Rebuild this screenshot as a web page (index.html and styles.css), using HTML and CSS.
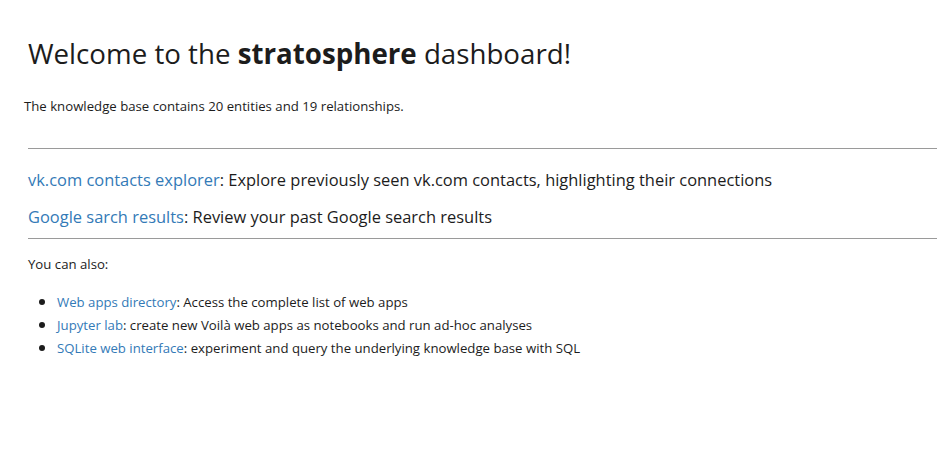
FILE: index.html
```html
<!DOCTYPE html>
<html lang="en">
<head>
<meta charset="utf-8">
<title>stratosphere dashboard</title>
<link rel="stylesheet" href="styles.css">
</head>
<body>
<main class="page">
  <h1 class="title">Welcome to the <strong>stratosphere</strong> dashboard!</h1>
  <p class="summary">The knowledge base contains 20 entities and 19 relationships.</p>
  <section class="apps">
    <hr class="rule">
    <div class="app-row"><a href="#">vk.com contacts explorer</a>: Explore previously seen vk.com contacts, highlighting their connections</div>
    <div class="app-row"><a href="#">Google sarch results</a>: Review your past Google search results</div>
    <hr class="rule">
    <p class="also">You can also:</p>
    <ul class="links">
      <li><a href="#">Web apps directory</a>: Access the complete list of web apps</li>
      <li><a href="#">Jupyter lab</a>: create new Voilà web apps as notebooks and run ad-hoc analyses</li>
      <li><a href="#">SQLite web interface</a>: experiment and query the underlying knowledge base with SQL</li>
    </ul>
  </section>
</main>
</body>
</html>
```

FILE: styles.css
```css
html, body {
  margin: 0;
  padding: 0;
  background: #ffffff;
}

body {
  font-family: "Open Sans", "Noto Sans", sans-serif;
  color: #1c1c1c;
}

.page {
  padding-left: 24px;
  padding-top: 33px;
}

a {
  color: #337ab7;
  text-decoration: none;
}

.title {
  margin: 0 0 23px 4px;
  font-size: 27.7px;
  line-height: 40px;
  font-weight: 400;
}

.title strong {
  font-weight: 700;
}

.summary {
  margin: 0;
  font-size: 13.2px;
  line-height: 20px;
}

.apps {
  margin-left: 4px;
  padding-top: 32px;
}

.rule {
  margin: 0;
  border: 0;
  border-top: 1px solid #9a9a9a;
  height: 0;
}

.apps .rule:first-child {
  margin-bottom: 12px;
}

.app-row {
  font-size: 16.45px;
  line-height: 37px;
}

.app-row + .rule {
  margin-top: 3px;
}

.also {
  margin: 15px 0 16px;
  font-size: 13.2px;
  line-height: 20px;
}

.links {
  margin: 0;
  padding-left: 29px;
  font-size: 13.2px;
  line-height: 22px;
}

.links li::marker {
  font-size: 16px;
  color: #1c1c1c;
}
```
